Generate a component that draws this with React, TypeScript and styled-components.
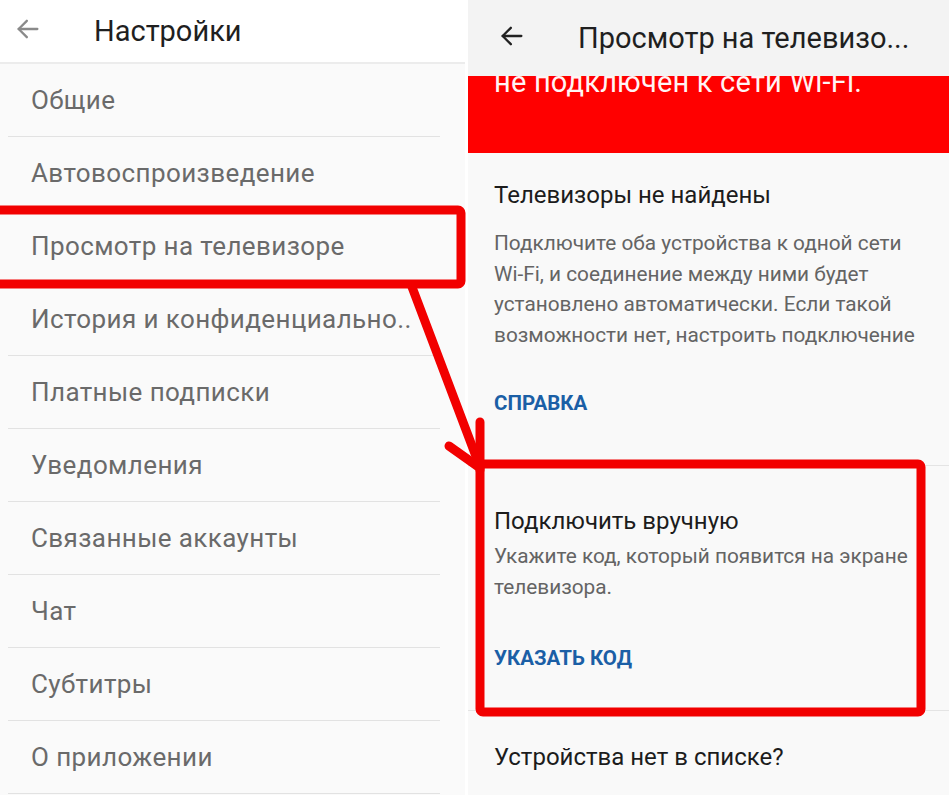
import React from 'react';
import styled, { createGlobalStyle } from 'styled-components';

const GlobalStyle = createGlobalStyle`
    body {
        margin: 0;
        background: #ffffff;
        font-family: Roboto, "Noto Sans", "Liberation Sans", sans-serif;
    }
`;

// --- page shell ---
const Page = styled.div`
    position: relative;
    width: 949px;
    height: 795px;
    overflow: hidden;
    display: flex;
    gap: 3px;
    background: #ffffff;
`;

const LeftPanel = styled.section`
    width: 465px;
    flex-shrink: 0;
    background: #fafafa;
    display: flex;
    flex-direction: column;
`;

const RightPanel = styled.section`
    flex: 1;
    background: #f9f9f9;
    display: flex;
    flex-direction: column;
`;

const TopBar = styled.header<{ $height: number; $bg: string; $border?: boolean }>`
    height: ${p => p.$height}px;
    flex-shrink: 0;
    display: flex;
    align-items: center;
    background: ${p => p.$bg};
    border-bottom: ${p => (p.$border ? '2px solid #ececec' : 'none')};
    box-sizing: border-box;
`;

const BackButton = styled.span<{ $left: number; $shift: number }>`
    width: 30px;
    height: 30px;
    margin-left: ${p => p.$left}px;
    margin-top: ${p => p.$shift}px;
    display: flex;
    align-items: center;
    justify-content: center;
`;

const Title = styled.h1<{ $left: number }>`
    margin: 0 0 0 ${p => p.$left}px;
    font-size: 29px;
    font-weight: 400;
    color: #1f1f1f;
    white-space: nowrap;
`;

// --- settings list ---
const List = styled.ul`
    list-style: none;
    margin: 0;
    padding: 0;
`;

const Row = styled.li`
    height: 73px;
    margin: 0 25px 0 8px;
    padding-left: 23px;
    display: flex;
    align-items: center;
    border-bottom: 1px solid #e2e2e2;
    box-sizing: border-box;
    font-size: 26px;
    letter-spacing: 0.4px;
    color: #6a6a6a;
    white-space: nowrap;
`;

// --- cast screen ---
const Banner = styled.div`
    height: 77px;
    flex-shrink: 0;
    background: #ff0000;
    overflow: hidden;
    padding-left: 26px;
`;

const BannerText = styled.p`
    margin: -8px 0 0;
    font-size: 29px;
    line-height: 29px;
    letter-spacing: 0.2px;
    color: #fff4f4;
    white-space: nowrap;
`;

const Section = styled.div<{ $top: number; $bottom: number; $divider?: boolean }>`
    padding: ${p => p.$top}px 10px ${p => p.$bottom}px 26px;
    border-bottom: ${p => (p.$divider ? '1px solid #e4e4e4' : 'none')};
`;

const SectionTitle = styled.h2`
    margin: 0;
    font-size: 24px;
    line-height: 30px;
    font-weight: 400;
    color: #1c1c1c;
    white-space: nowrap;
`;

const Description = styled.p<{ $gap: number; $lh: number }>`
    margin: ${p => p.$gap}px 0 0;
    font-size: 20.8px;
    line-height: ${p => p.$lh}px;
    color: #646464;
    white-space: nowrap;
`;

const ActionLink = styled.a<{ $gap: number }>`
    display: block;
    margin-top: ${p => p.$gap}px;
    font-size: 20.5px;
    line-height: 24px;
    font-weight: 700;
    color: #1b5fa6;
    text-decoration: none;
`;

// red markup drawn on top of the screenshot
const Markup = styled.svg`
    position: absolute;
    inset: 0;
    pointer-events: none;
`;

const Arrow = ({ color }: { color: string }) => (
    <svg width="28" height="28" viewBox="0 0 24 24" fill="none" stroke={color} strokeWidth="2" strokeLinecap="round" strokeLinejoin="round">
        <path d="M20 12H4" />
        <path d="M11 5l-7 7 7 7" />
    </svg>
);

const settings = [
    'Общие',
    'Автовоспроизведение',
    'Просмотр на телевизоре',
    'История и конфиденциально..',
    'Платные подписки',
    'Уведомления',
    'Связанные аккаунты',
    'Чат',
    'Субтитры',
    'О приложении',
];

export default function App() {
    return (
        <>
            <GlobalStyle />
            <Page>
                <LeftPanel>
                    <TopBar $height={64} $bg="#ffffff" $border>
                        <BackButton $left={13} $shift={-4}><Arrow color="#8a8a8a" /></BackButton>
                        <Title $left={51}>Настройки</Title>
                    </TopBar>
                    <List>
                        {settings.map(s => <Row key={s}>{s}</Row>)}
                    </List>
                </LeftPanel>

                <RightPanel>
                    <TopBar $height={76} $bg="#f3f3f3">
                        <BackButton $left={29} $shift={-4}><Arrow color="#222" /></BackButton>
                        <Title $left={51}>Просмотр на телевизо...</Title>
                    </TopBar>
                    <Banner>
                        <BannerText>не подключен к сети Wi-Fi.</BannerText>
                    </Banner>
                    <Section $top={27} $bottom={50} $divider>
                        <SectionTitle>Телевизоры не найдены</SectionTitle>
                        <Description $gap={18} $lh={30.5}>
                            Подключите оба устройства к одной сети<br />
                            Wi-Fi, и соединение между ними будет<br />
                            установлено автоматически. Если такой<br />
                            возможности нет, настроить подключение
                        </Description>
                        <ActionLink $gap={41}>СПРАВКА</ActionLink>
                    </Section>
                    <Section $top={40} $bottom={40} $divider>
                        <SectionTitle>Подключить вручную</SectionTitle>
                        <Description $gap={5} $lh={31}>
                            Укажите код, который появится на экране<br />
                            телевизора.
                        </Description>
                        <ActionLink $gap={43}>УКАЗАТЬ КОД</ActionLink>
                    </Section>
                    <Section $top={31} $bottom={0}>
                        <SectionTitle>Устройства нет в списке?</SectionTitle>
                    </Section>
                </RightPanel>

                <Markup width="949" height="795" viewBox="0 0 949 795">
                    <g fill="none" stroke="#f20000" strokeWidth="9" strokeLinecap="round" strokeLinejoin="round">
                        <rect x="-20" y="210" width="481" height="74" rx="3" />
                        <path d="M412 287 L480 467" />
                        <path d="M480 422 L480 470 M449 446 L480 468" />
                        <rect x="480" y="464" width="441" height="248" rx="3" />
                    </g>
                </Markup>
            </Page>
        </>
    );
}
